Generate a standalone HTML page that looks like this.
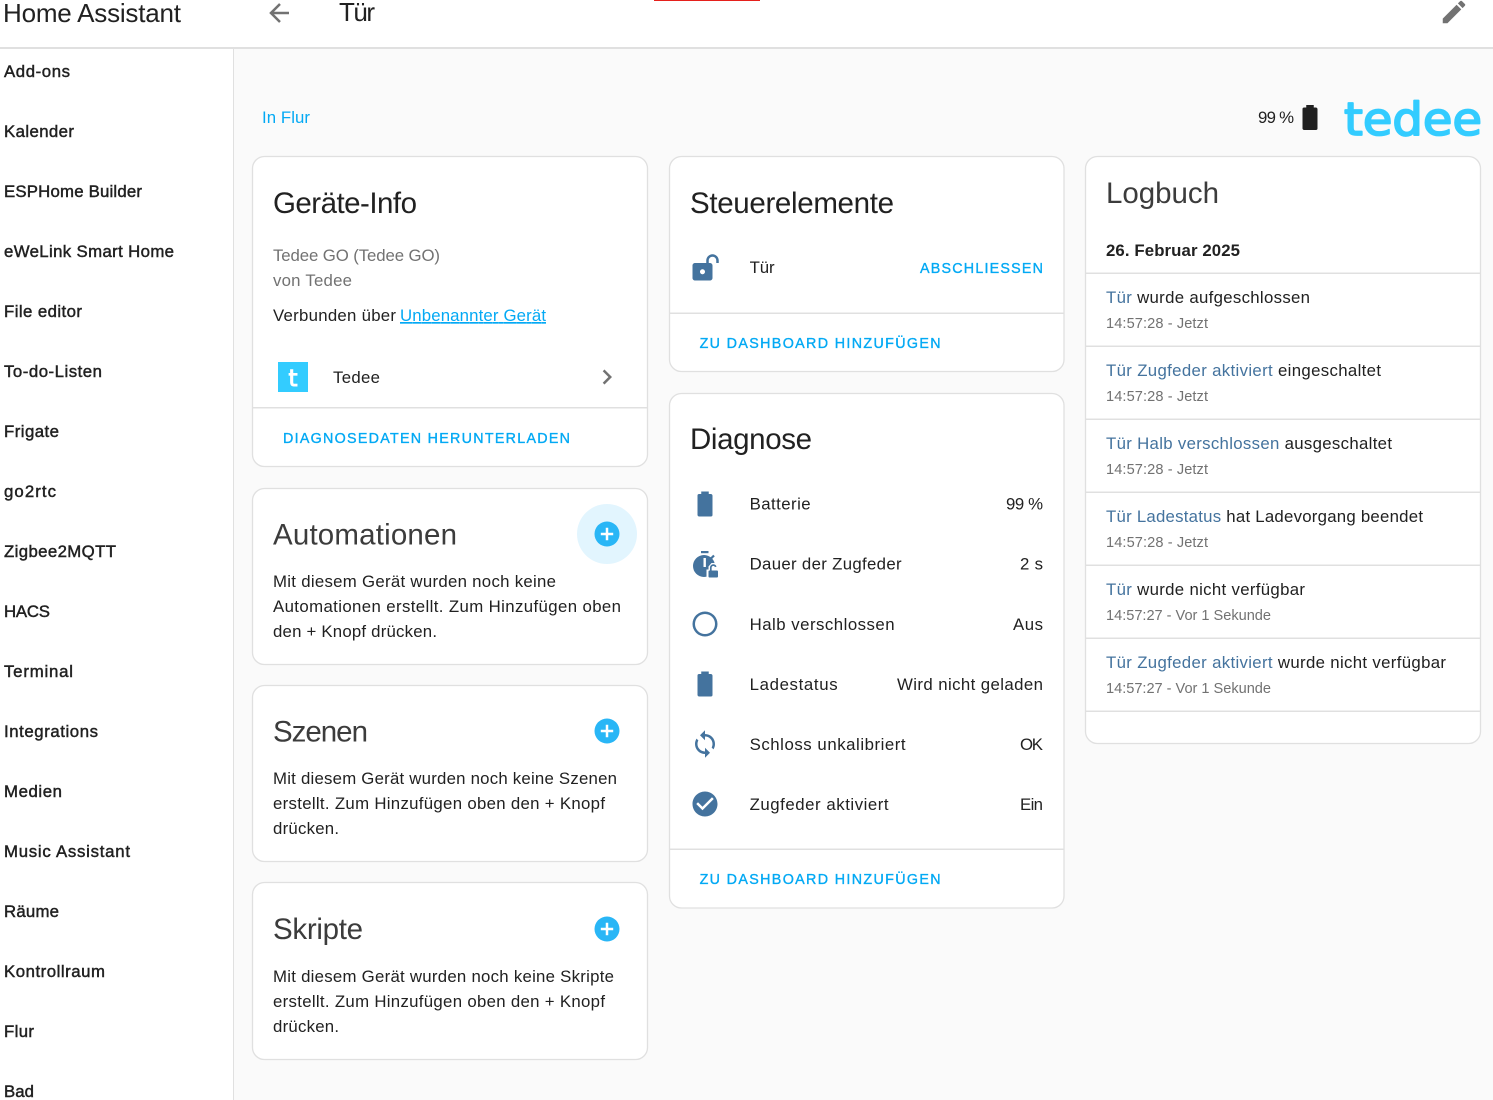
<!DOCTYPE html>
<html lang="de"><head><meta charset="utf-8"><title>Tür</title>
<style>
html,body{margin:0;padding:0;background:#fafafa;overflow:hidden}
svg{display:block;font-family:"Liberation Sans",sans-serif;font-size:16.8px}
text{white-space:pre;fill:#212121}
.n{stroke:#212121;stroke-width:.45px}
.h{font-size:29.5px;fill:#3c3c3c}
.h0{font-size:29.5px;fill:#212121}
.s{font-size:14.6px;fill:#727272}
.g{fill:#727272}
.b{font-size:14.3px;fill:#03a9f4;stroke:#03a9f4;stroke-width:.35px}
.l{fill:#03a9f4}
tspan.e{fill:#44739e}
.c{fill:#fff;stroke:#e0e0e0;stroke-width:1.3}
.d{fill:#e0e0e0}
.i{fill:#44739e}
</style></head><body>
<svg width="1493" height="1100" viewBox="0 0 1493 1100" xmlns="http://www.w3.org/2000/svg">
<rect width="1493" height="1100" fill="#fafafa"/>
<rect x="0" y="0" width="233" height="1100" fill="#fff"/>
<rect x="233" y="0" width="1" height="1100" class="d"/>
<rect x="0" y="0" width="1493" height="47" fill="#fff"/>
<rect x="0" y="47" width="1493" height="2" class="d"/>
<rect x="654" y="0" width="106" height="1" fill="#e5201c"/>

<text x="3" y="22" font-size="26" textLength="178">Home Assistant</text>
<text x="339" y="21" font-size="26" textLength="36">Tür</text>
<path transform="translate(264,-2) scale(1.25)" fill="#727272" d="M20,11V13H8L13.5,18.5L12.08,19.92L4.16,12L12.08,4.08L13.5,5.5L8,11H20Z"/>
<path transform="translate(1439,-3) scale(1.25)" fill="#727272" d="M20.71,7.04C21.1,6.65 21.1,6 20.71,5.63L18.37,3.29C18,2.9 17.35,2.9 16.96,3.29L15.12,5.12L18.87,8.87M3,17.25V21H6.75L17.81,9.93L14.06,6.18L3,17.25Z"/>

<g>
<text class="n" x="4" y="77" textLength="66">Add-ons</text>
<text class="n" x="4" y="137" textLength="70">Kalender</text>
<text class="n" x="4" y="197" textLength="138">ESPHome Builder</text>
<text class="n" x="4" y="257" textLength="170">eWeLink Smart Home</text>
<text class="n" x="4" y="317" textLength="78">File editor</text>
<text class="n" x="4" y="377" textLength="98">To-do-Listen</text>
<text class="n" x="4" y="437" textLength="55">Frigate</text>
<text class="n" x="4" y="497" textLength="52">go2rtc</text>
<text class="n" x="4" y="557" textLength="112">Zigbee2MQTT</text>
<text class="n" x="4" y="617" textLength="46">HACS</text>
<text class="n" x="4" y="677" textLength="69">Terminal</text>
<text class="n" x="4" y="737" textLength="94">Integrations</text>
<text class="n" x="4" y="797" textLength="58">Medien</text>
<text class="n" x="4" y="857" textLength="126">Music Assistant</text>
<text class="n" x="4" y="917" textLength="55">Räume</text>
<text class="n" x="4" y="977" textLength="101">Kontrollraum</text>
<text class="n" x="4" y="1037" textLength="30">Flur</text>
<text class="n" x="4" y="1097" textLength="30">Bad</text>
</g>

<text class="l" x="262" y="123" textLength="48">In Flur</text>
<text x="1258" y="123" textLength="36">99 %</text>
<path transform="translate(1295,102.500) scale(1.25)" fill="#212121" d="M16.67,4H15V2H9V4H7.33A1.33,1.33 0 0,0 6,5.33V20.67C6,21.4 6.6,22 7.33,22H16.67A1.33,1.33 0 0,0 18,20.67V5.33C18,4.6 17.4,4 16.67,4Z"/>
<text x="1344" y="135" font-family="DejaVu Sans" font-size="45" textLength="138" lengthAdjust="spacingAndGlyphs" style="fill:#33ccff;stroke:#33ccff;stroke-width:1.800px;stroke-linejoin:round">tedee</text>

<!-- Column 1 -->
<rect class="c" x="252.500" y="156.500" width="395" height="310" rx="12"/>
<text class="h0" x="273" y="213" textLength="144">Geräte-Info</text>
<text class="g" x="273" y="261" textLength="167">Tedee GO (Tedee GO)</text>
<text class="g" x="273" y="286" textLength="79">von Tedee</text>
<text x="273" y="321" textLength="123">Verbunden über</text>
<text class="l" x="400" y="321" textLength="146" text-decoration="underline">Unbenannter Gerät</text>
<rect x="278" y="362" width="30" height="30" fill="#33ccff"/>
<text x="288.500" y="386" font-family="DejaVu Sans" font-size="23" style="fill:#fff;stroke:#fff;stroke-width:1px">t</text>
<text x="333" y="383" textLength="47">Tedee</text>
<path transform="translate(592,362) scale(1.25)" fill="#727272" d="M8.59,16.58L13.17,12L8.59,7.41L10,6L16,12L10,18L8.59,16.58Z"/>
<rect x="253" y="407" width="394" height="1.500" class="d"/>
<text class="b" x="283" y="443" textLength="287">DIAGNOSEDATEN HERUNTERLADEN</text>

<rect class="c" x="252.500" y="488.500" width="395" height="176" rx="12"/>
<text class="h" x="273" y="544.500" textLength="184">Automationen</text>
<circle cx="607" cy="534" r="30" fill="#e2f5fe"/>
<circle cx="607" cy="534" r="12.500" fill="#29b6f6"/>
<path d="M600.800 534h12.400M607 527.800v12.400" stroke="#fff" stroke-width="2.500" fill="none"/>
<text x="273" y="587" textLength="283">Mit diesem Gerät wurden noch keine</text>
<text x="273" y="612" textLength="348">Automationen erstellt. Zum Hinzufügen oben</text>
<text x="273" y="637" textLength="164">den + Knopf drücken.</text>

<rect class="c" x="252.500" y="685.500" width="395" height="176" rx="12"/>
<text class="h" x="273" y="741.500" textLength="95">Szenen</text>
<circle cx="607" cy="731" r="12.500" fill="#29b6f6"/>
<path d="M600.800 731h12.400M607 724.800v12.400" stroke="#fff" stroke-width="2.500" fill="none"/>
<text x="273" y="784" textLength="344">Mit diesem Gerät wurden noch keine Szenen</text>
<text x="273" y="809" textLength="332">erstellt. Zum Hinzufügen oben den + Knopf</text>
<text x="273" y="834" textLength="66">drücken.</text>

<rect class="c" x="252.500" y="882.500" width="395" height="177" rx="12"/>
<text class="h" x="273" y="939" textLength="90">Skripte</text>
<circle cx="607" cy="929" r="12.500" fill="#29b6f6"/>
<path d="M600.800 929h12.400M607 922.800v12.400" stroke="#fff" stroke-width="2.500" fill="none"/>
<text x="273" y="982" textLength="341">Mit diesem Gerät wurden noch keine Skripte</text>
<text x="273" y="1007" textLength="332">erstellt. Zum Hinzufügen oben den + Knopf</text>
<text x="273" y="1032" textLength="66">drücken.</text>

<!-- Column 2 -->
<rect class="c" x="669.500" y="156.500" width="394.500" height="215" rx="12"/>
<text class="h0" x="690" y="213" textLength="204">Steuerelemente</text>
<path class="i" transform="translate(690,253) scale(1.25)" d="M18,1C15.24,1 13,3.24 13,6V8H4C2.9,8 2,8.9 2,10V20C2,21.1 2.9,22 4,22H16C17.1,22 18,21.1 18,20V10C18,8.9 17.1,8 16,8H15V6C15,4.34 16.34,3 18,3C19.66,3 21,4.34 21,6V8H23V6C23,3.24 20.76,1 18,1M10,17C8.9,17 8,16.1 8,15C8,13.9 8.9,13 10,13C11.1,13 12,13.9 12,15C12,16.1 11.1,17 10,17Z"/>
<text x="749.600" y="273" textLength="25">Tür</text>
<text class="b" x="920" y="273" textLength="123">ABSCHLIESSEN</text>
<rect x="670" y="312.500" width="394" height="1.500" class="d"/>
<text class="b" x="699.600" y="348" textLength="241">ZU DASHBOARD HINZUFÜGEN</text>

<rect class="c" x="669.500" y="393.500" width="394.500" height="514.500" rx="12"/>
<text class="h0" x="690" y="449" textLength="122">Diagnose</text>
<path class="i" transform="translate(690,489) scale(1.25)" d="M16.67,4H15V2H9V4H7.33A1.33,1.33 0 0,0 6,5.33V20.67C6,21.4 6.6,22 7.33,22H16.67A1.33,1.33 0 0,0 18,20.67V5.33C18,4.6 17.4,4 16.67,4Z"/>
<text x="749.600" y="509.500" textLength="61">Batterie</text>
<text x="1006" y="509.500" textLength="37">99 %</text>

<g>
<rect class="i" x="701" y="551" width="7.500" height="2.200"/>
<circle class="i" cx="704" cy="566" r="11"/>
<path d="M711 558.500l3-3" stroke="#44739e" stroke-width="2.200"/>
<rect x="703.500" y="558" width="2.400" height="9" fill="#fff"/>
<path d="M706.500 580v-10.500h2v-3l3-3.500h3l3 3v14z" fill="#fff"/>
<rect class="i" x="708.500" y="570.500" width="9.500" height="7" rx="1"/>
<path d="M710.800 571v-3.500a2.500 2.500 0 0 1 4.900 -.6" stroke="#44739e" stroke-width="1.700" fill="none"/>
</g>
<text x="749.600" y="569.500" textLength="152">Dauer der Zugfeder</text>
<text x="1020" y="569.500" textLength="23">2 s</text>

<path class="i" transform="translate(690,609) scale(1.25)" d="M12,20A8,8 0 0,1 4,12A8,8 0 0,1 12,4A8,8 0 0,1 20,12A8,8 0 0,1 12,20M12,2A10,10 0 0,0 2,12A10,10 0 0,0 12,22A10,10 0 0,0 22,12A10,10 0 0,0 12,2Z"/>
<text x="749.600" y="630" textLength="145">Halb verschlossen</text>
<text x="1013" y="630" textLength="30">Aus</text>

<path class="i" transform="translate(690,669) scale(1.25)" d="M16.67,4H15V2H9V4H7.33A1.33,1.33 0 0,0 6,5.33V20.67C6,21.4 6.6,22 7.33,22H16.67A1.33,1.33 0 0,0 18,20.67V5.33C18,4.6 17.4,4 16.67,4Z"/>
<text x="749.600" y="690" textLength="88">Ladestatus</text>
<text x="897" y="690" textLength="146">Wird nicht geladen</text>

<path class="i" transform="translate(690,729) scale(1.25)" d="M12,18A6,6 0 0,1 6,12C6,11 6.25,10.03 6.7,9.2L5.24,7.74C4.46,8.97 4,10.43 4,12A8,8 0 0,0 12,20V23L16,19L12,15M12,4V1L8,5L12,9V6A6,6 0 0,1 18,12C18,13 17.75,13.97 17.3,14.8L18.76,16.26C19.54,15.03 20,13.57 20,12A8,8 0 0,0 12,4Z"/>
<text x="749.600" y="750" textLength="156">Schloss unkalibriert</text>
<text x="1020" y="750" textLength="23">OK</text>

<path class="i" transform="translate(690,789) scale(1.25)" d="M12 2C6.5 2 2 6.5 2 12S6.5 22 12 22 22 17.500 22 12 17.500 2 12 2M10 17L5 12L6.41 10.59L10 14.17L17.59 6.58L19 8L10 17Z"/>
<text x="749.600" y="810" textLength="139">Zugfeder aktiviert</text>
<text x="1020" y="810" textLength="23">Ein</text>
<rect x="670" y="848.500" width="394" height="1.500" class="d"/>
<text class="b" x="699.600" y="884" textLength="241">ZU DASHBOARD HINZUFÜGEN</text>

<!-- Column 3 -->
<rect class="c" x="1085.500" y="156.500" width="395" height="587" rx="12"/>
<text class="h" x="1106" y="203" textLength="113">Logbuch</text>
<text x="1106" y="256" font-weight="bold" textLength="134">26. Februar 2025</text>
<rect x="1086" y="272.500" width="394" height="1.500" class="d"/>
<rect x="1086" y="345.500" width="394" height="1.500" class="d"/>
<rect x="1086" y="418.500" width="394" height="1.500" class="d"/>
<rect x="1086" y="491.500" width="394" height="1.500" class="d"/>
<rect x="1086" y="564.500" width="394" height="1.500" class="d"/>
<rect x="1086" y="637.500" width="394" height="1.500" class="d"/>
<rect x="1086" y="710.500" width="394" height="1.500" class="d"/>

<text x="1106" y="303" textLength="204"><tspan class="e">Tür</tspan> wurde aufgeschlossen</text>
<text class="s" x="1106" y="328" textLength="102">14:57:28 - Jetzt</text>
<text x="1106" y="376" textLength="275"><tspan class="e">Tür Zugfeder aktiviert</tspan> eingeschaltet</text>
<text class="s" x="1106" y="401" textLength="102">14:57:28 - Jetzt</text>
<text x="1106" y="449" textLength="286"><tspan class="e">Tür Halb verschlossen</tspan> ausgeschaltet</text>
<text class="s" x="1106" y="474" textLength="102">14:57:28 - Jetzt</text>
<text x="1106" y="522" textLength="317"><tspan class="e">Tür Ladestatus</tspan> hat Ladevorgang beendet</text>
<text class="s" x="1106" y="547" textLength="102">14:57:28 - Jetzt</text>
<text x="1106" y="595" textLength="199"><tspan class="e">Tür</tspan> wurde nicht verfügbar</text>
<text class="s" x="1106" y="620" textLength="165">14:57:27 - Vor 1 Sekunde</text>
<text x="1106" y="668" textLength="340"><tspan class="e">Tür Zugfeder aktiviert</tspan> wurde nicht verfügbar</text>
<text class="s" x="1106" y="693" textLength="165">14:57:27 - Vor 1 Sekunde</text>
</svg>
</body></html>
